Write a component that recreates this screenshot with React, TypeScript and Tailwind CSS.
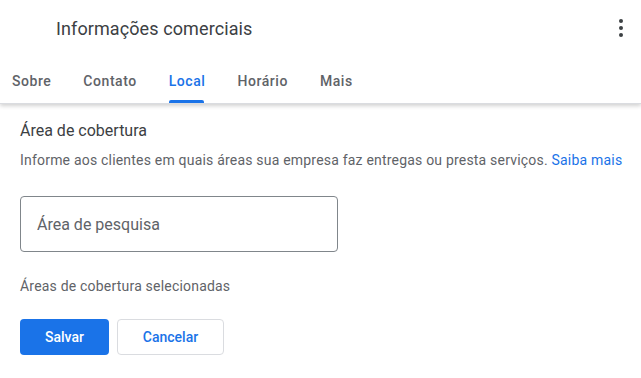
import { useState } from 'react';

const tabs = ['Sobre', 'Contato', 'Local', 'Horário', 'Mais'];

export default function App() {
  const [active, setActive] = useState('Local');
  const [query, setQuery] = useState('');

  return (
    <div className="w-[641px] h-[378px] bg-white font-['Roboto',sans-serif] overflow-hidden">
      {/* Header */}
      <div className="relative z-10 shadow-[0_2px_4px_rgba(0,0,0,0.18)] border-b border-[#dadce0]">
        <div className="flex items-center justify-between h-[56px] pl-[56px] pr-[10px]">
          <h1 className="text-[18px] text-[#3c4043] tracking-[0.1px]">Informações comerciais</h1>
          <button className="w-[20px] h-[28px] flex flex-col items-center justify-center gap-[3px]">
            <span className="w-[4px] h-[4px] rounded-full bg-[#3c4043]" />
            <span className="w-[4px] h-[4px] rounded-full bg-[#3c4043]" />
            <span className="w-[4px] h-[4px] rounded-full bg-[#3c4043]" />
          </button>
        </div>
        <div className="flex pl-[12px] gap-[32px] h-[47px] pt-[4px]">
          {tabs.map((t) => (
            <button
              key={t}
              onClick={() => setActive(t)}
              className={`relative flex items-center text-[14px] font-medium tracking-[0.55px] ${
                active === t ? 'text-[#1a73e8]' : 'text-[#5f6368]'
              }`}
            >
              {t}
              {active === t && (
                <span className="absolute left-0 right-[1px] bottom-0 h-[3px] rounded-t-[2px] bg-[#1a73e8]" />
              )}
            </button>
          ))}
        </div>
      </div>

      {/* Content */}
      <div className="px-[20px] pt-[16px]">
        <h2 className="text-[16px] text-[#3c4043] leading-[22px]">Área de cobertura</h2>
        <p className="mt-[8px] text-[14px] text-[#5f6368] leading-[20px] tracking-[0.2px] whitespace-nowrap">
          Informe aos clientes em quais áreas sua empresa faz entregas ou presta serviços.{' '}
          <a href="#" className="text-[#1a73e8]">Saiba mais</a>
        </p>

        <input
          value={query}
          onChange={(e) => setQuery(e.target.value)}
          placeholder="Área de pesquisa"
          className="mt-[26px] block w-[318px] h-[56px] rounded-[4px] border border-[#80868b] px-[16px] text-[16px] text-[#202124] placeholder:text-[#5f6368] outline-none"
        />

        <p className="mt-[24px] text-[14px] text-[#5f6368] leading-[20px] tracking-[0.2px]">Áreas de cobertura selecionadas</p>

        <div className="mt-[23px] flex gap-[8px]">
          <button className="w-[89px] h-[36px] rounded-[4px] bg-[#1a73e8] text-white text-[14px] font-medium">
            Salvar
          </button>
          <button className="w-[107px] h-[36px] rounded-[4px] border border-[#dadce0] text-[#1a73e8] text-[14px] font-medium">
            Cancelar
          </button>
        </div>
      </div>
    </div>
  );
}
